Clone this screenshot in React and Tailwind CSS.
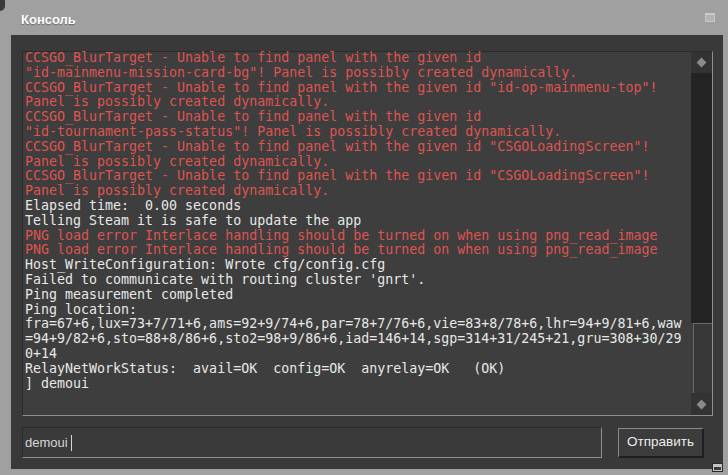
const R = 'text-[#df5450]';
const W = 'text-[#e8e8e8]';

const lines = [
  [R, 'CCSGO_BlurTarget - Unable to find panel with the given id'],
  [R, '"id-mainmenu-mission-card-bg"! Panel is possibly created dynamically.'],
  [R, 'CCSGO_BlurTarget - Unable to find panel with the given id "id-op-mainmenu-top"!'],
  [R, 'Panel is possibly created dynamically.'],
  [R, 'CCSGO_BlurTarget - Unable to find panel with the given id'],
  [R, '"id-tournament-pass-status"! Panel is possibly created dynamically.'],
  [R, 'CCSGO_BlurTarget - Unable to find panel with the given id "CSGOLoadingScreen"!'],
  [R, 'Panel is possibly created dynamically.'],
  [R, 'CCSGO_BlurTarget - Unable to find panel with the given id "CSGOLoadingScreen"!'],
  [R, 'Panel is possibly created dynamically.'],
  [W, 'Elapsed time:  0.00 seconds'],
  [W, 'Telling Steam it is safe to update the app'],
  [R, 'PNG load error Interlace handling should be turned on when using png_read_image'],
  [R, 'PNG load error Interlace handling should be turned on when using png_read_image'],
  [W, 'Host_WriteConfiguration: Wrote cfg/config.cfg'],
  [W, "Failed to communicate with routing cluster 'gnrt'."],
  [W, 'Ping measurement completed'],
  [W, 'Ping location:'],
  [W, 'fra=67+6,lux=73+7/71+6,ams=92+9/74+6,par=78+7/76+6,vie=83+8/78+6,lhr=94+9/81+6,waw'],
  [W, '=94+9/82+6,sto=88+8/86+6,sto2=98+9/86+6,iad=146+14,sgp=314+31/245+21,gru=308+30/29'],
  [W, '0+14'],
  [W, 'RelayNetWorkStatus:  avail=OK  config=OK  anyrelay=OK   (OK)'],
  [W, '] demoui'],
];

const Diamond = () => (
  <div className="w-[7px] h-[7px] rotate-45 bg-[#8a8a8a]" />
);

export default function App() {
  return (
    <div className="relative w-[728px] h-[475px] bg-[#a0a0a0] overflow-hidden flex flex-col font-['Liberation_Sans',sans-serif]">
      <div className="absolute left-0 top-0 w-[5px] h-[11px] bg-[#3a3a3a] rounded-br-[5px]" />

      {/* title bar */}
      <div className="h-[35px] flex items-center justify-between pl-[21px] pr-[13px] pt-[5px]">
        <span className="text-white font-bold text-[13px] [text-shadow:0_1px_1px_rgba(0,0,0,0.35)]">Консоль</span>
        <div className="w-[10px] h-[9px] border border-[#c9c9c9] border-t-2 bg-[#b4b4b4] mb-[5px]" />
      </div>

      {/* dark panel */}
      <div className="ml-[11px] mr-[5px] h-[434px] bg-[#393939] flex flex-col pt-[16px] pl-[11px] pr-[10px]">
        {/* console output */}
        <div className="h-[365px] flex bg-[#3e3e3e] border-t border-l border-t-[#2c2c2c] border-l-[#2c2c2c] border-b border-r border-b-[#8f8f8f] border-r-[#8f8f8f]">
          <div className="flex-1 overflow-hidden pl-[2px] -mt-px font-['DejaVu_Sans_Mono',monospace] text-[13.3px] leading-[14.8px] whitespace-pre">
            {lines.map(([c, t], i) => (
              <div key={i} className={c}>{t}</div>
            ))}
          </div>
          <div className="w-[21px] flex flex-col">
            <div className="h-[21px] bg-[#333333] flex items-center justify-center">
              <Diamond />
            </div>
            <div className="flex-1 bg-[#232323]" />
            <div className="h-[70px] bg-[#373737] border-t border-l border-[#6a6a6a] ml-[2px]" />
            <div className="h-[22px] bg-[#333333] flex items-center justify-center">
              <Diamond />
            </div>
          </div>
        </div>

        {/* input row */}
        <div className="mt-[11px] flex items-start gap-[16px]">
          <div className="w-[580px] h-[31px] bg-[#3a3a3a] border-t border-l border-t-[#2a2a2a] border-l-[#2a2a2a] border-b border-r border-b-[#8f8f8f] border-r-[#8f8f8f] flex items-center pl-[2px]">
            <span className="text-[#d6d6d6] text-[13px]">demoui</span>
            <span className="ml-[3px] w-px h-[16px] bg-[#d6d6d6]" />
          </div>
          <div className="mt-px w-[86px] h-[30px] bg-[#3c3c3c] border-t border-l border-t-[#8a8a8a] border-l-[#8a8a8a] border-b-2 border-r-2 border-b-[#1f1f1f] border-r-[#1f1f1f] flex items-center justify-center">
            <span className="text-[#ececec] text-[13.5px]">Отправить</span>
          </div>
        </div>
      </div>

      <div className="absolute left-[712px] top-[463px] w-[11px] h-[9px] border border-[#2a2a2a] bg-[#c4c4c4] flex items-end p-px">
        <div className="w-full h-[3px] bg-[#3a3a3a]" />
      </div>
    </div>
  );
}
